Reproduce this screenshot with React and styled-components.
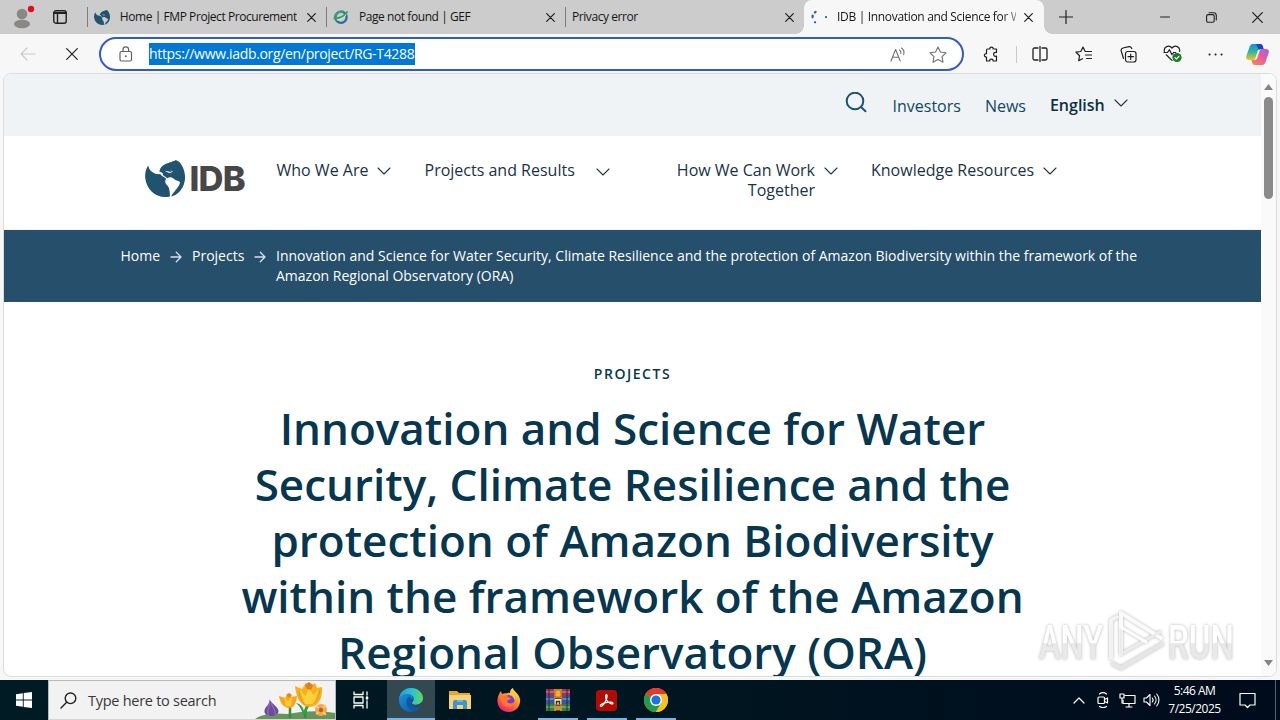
import React from 'react';
import styled, { createGlobalStyle } from 'styled-components';

const Global = createGlobalStyle`
  * { box-sizing: border-box; }
  html, body { margin: 0; padding: 0; overflow: hidden; }
  body { font-family: "Open Sans", "Noto Sans", sans-serif; }
  svg { display: block; flex: none; }
`;

const Desktop = styled.div`
  width: 1280px;
  height: 720px;
  display: flex;
  flex-direction: column;
  overflow: hidden;
  background: #f7f7f7;
`;

/* Browser chrome */
const TabStrip = styled.div`
  height: 34px;
  flex: none;
  display: flex;
  align-items: center;
  background: #cccccc;
`;
const StripButton = styled.div`
  width: ${(p) => p.$w}px;
  height: 34px;
  flex: none;
  display: flex;
  align-items: center;
  justify-content: center;
`;
const Tab = styled.div`
  position: relative;
  width: ${(p) => p.$w || 239}px;
  height: 34px;
  flex: none;
  display: flex;
  align-items: center;
  padding: 0 ${(p) => (p.$active ? 11 : 10)}px 0 7px;
  gap: ${(p) => p.$gap ?? 10}px;
  ${(p) =>
    p.$active
      ? `
    background: #f7f7f7;
    border-radius: 8px 8px 0 0;
    &::before, &::after { content: ""; position: absolute; bottom: 0; width: 8px; height: 8px; }
    &::before { left: -8px; background: radial-gradient(circle at 0 0, #ccc 7.5px, #f7f7f7 8px); }
    &::after { right: -8px; background: radial-gradient(circle at 100% 0, #ccc 7.5px, #f7f7f7 8px); }
  `
      : `&::before { content: ""; width: 1px; height: 20px; background: #7d7d7d; margin-left: -7px; margin-right: -4px; }`}
`;
const TabTitle = styled.span`
  flex: 1;
  min-width: 0;
  overflow: hidden;
  white-space: nowrap;
  font-size: 12px;
  line-height: 18px;
  letter-spacing: ${(p) => p.$ls || 0}px;
  color: #161616;
  ${(p) => p.$fade && 'mask-image: linear-gradient(90deg, #000 165px, transparent 192px);'}
`;
const Spacer = styled.div`
  flex: 1;
`;
const Toolbar = styled.div`
  height: 39px;
  flex: none;
  display: flex;
  align-items: center;
  padding-top: 1px;
  background: #f7f7f7;
`;
const AddressBar = styled.div`
  width: 865px;
  height: 34px;
  margin-left: 11px;
  flex: none;
  display: flex;
  align-items: center;
  border: 2px solid #315cc4;
  border-radius: 17px;
  background: #fff;
  padding: 0 15px 0 18px;
`;
const Url = styled.span`
  height: 22px;
  margin-left: 16px;
  width: 266px;
  line-height: 21px;
  font-size: 14px;
  letter-spacing: ${(p) => p.$ls}px;
  white-space: nowrap;
  background: #0078d7;
  color: #fff;
`;
const ToolDivider = styled.div`
  width: 1px;
  height: 17px;
  background: #c9c9c9;
`;

/* Web page */
const PageFrame = styled.div`
  position: relative;
  height: 604px;
  flex: none;
  margin: 0 3px;
  border: 1px solid #dcdcdc;
  border-radius: 8px;
  display: flex;
  overflow: hidden;
  background: #fff;
`;
const Page = styled.div`
  width: 1257px;
  flex: none;
  height: 602px;
  overflow: hidden;
  color: #173347;
`;
const UtilityBar = styled.div`
  height: 62px;
  display: flex;
  padding-left: 841px;
  background: #eff3f6;
  color: #0f4663;
`;
const UtilityLink = styled.span`
  margin: ${(p) => p.$top || 20}px 0 0 24px;
  font-size: 16px;
  line-height: 24px;
  font-weight: ${(p) => (p.$strong ? 600 : 400)};
  color: ${(p) => (p.$strong ? '#0c2f42' : 'inherit')};
  white-space: nowrap;
`;
const SearchToggle = styled.div`
  width: 23.5px;
  padding-top: 18px;
`;
const Header = styled.div`
  height: 94px;
  display: flex;
  padding: 24px 0 0 141px;
  border-bottom: 1px solid #f2f4f6;
`;
const Logo = styled.div`
  width: 131.5px;
  display: flex;
  align-items: flex-start;
`;
const LogoText = styled.span`
  font: 800 34.5px/37px Inter, sans-serif;
  letter-spacing: -0.8px;
  color: #474747;
  margin-left: 4.5px;
`;
const NavItem = styled.div`
  display: flex;
  align-items: flex-start;
  width: ${(p) => p.$w}px;
  font-size: 16px;
  line-height: 20px;
  white-space: nowrap;
`;
const NavLabel = styled.span`
  width: ${(p) => p.$w}px;
  text-align: ${(p) => p.$align || 'left'};
`;
const Gap = styled.div`
  width: ${(p) => p.$w}px;
  padding-top: ${(p) => p.$top || 0}px;
  display: flex;
  justify-content: flex-end;
`;
const Breadcrumbs = styled.div`
  height: 72px;
  display: flex;
  padding: 16px 0 0 116.5px;
  background: #254f6b;
  color: #fff;
  font-size: 14px;
  line-height: 20px;
  font-weight: 500;
`;
const Crumb = styled.div`
  width: ${(p) => p.$w}px;
  white-space: nowrap;
`;
const CrumbArrow = styled.div`
  width: 32px;
  padding: 5px 0 0 10px;
`;
const Hero = styled.main`
  padding-top: 62px;
  text-align: center;
  color: #06374f;
`;
const Eyebrow = styled.div`
  font-size: 14px;
  line-height: 20px;
  font-weight: 600;
  letter-spacing: 1.55px;
`;
const Title = styled.h1`
  margin: 16px 0 0;
  font-size: 44px;
  line-height: 56px;
  font-weight: 600;
  white-space: nowrap;
`;
const Scrollbar = styled.div`
  width: 15px;
  height: 602px;
  display: flex;
  flex-direction: column;
  align-items: center;
  background: #fafafa;
  padding: 10px 0;
`;
const Thumb = styled.div`
  width: 9px;
  height: 102px;
  margin-top: 7px;
  border-radius: 5px;
  background: #8b8b8b;
`;
const Watermark = styled.div`
  position: absolute;
  left: 1029px;
  top: 532px;
`;

/* Taskbar */
const Taskbar = styled.div`
  height: 40px;
  margin-top: auto;
  flex: none;
  display: flex;
  background: linear-gradient(90deg, #001b24, #001520 55%, #000b1c);
`;
const Start = styled.div`
  width: 48px;
  display: flex;
  align-items: center;
  justify-content: center;
`;
const Search = styled.div`
  width: 288px;
  flex: none;
  display: flex;
  align-items: center;
  padding-left: 11px;
  background: #f2f2f2;
  border: 1px solid #b8b8b8;
  border-bottom-color: #d5d5d5;
  color: #383838;
  font-size: 14.5px;
`;
const SearchText = styled.span`
  width: 172px;
  margin-left: 11px;
  letter-spacing: ${(p) => p.$ls}px;
  white-space: nowrap;
`;
const TaskButton = styled.div`
  width: ${(p) => p.$w || 49}px;
  display: flex;
  align-items: center;
  justify-content: center;
  position: relative;
  background: ${(p) => (p.$active ? '#34484f' : 'transparent')};
  &::after {
    content: "";
    display: ${(p) => (p.$open ? 'block' : 'none')};
    position: absolute;
    bottom: 0;
    height: 2px;
    width: ${(p) => (p.$active ? 48 : 40)}px;
    background: #76b5e8;
  }
`;
const TrayIcon = styled.div`
  width: 24px;
  display: flex;
  align-items: center;
  justify-content: center;
`;
const Clock = styled.div`
  width: 63px;
  padding-top: 2px;
  text-align: center;
  color: #fff;
  font-size: 12px;
  line-height: 18px;
  letter-spacing: ${(p) => p.$ls}px;
  white-space: nowrap;
`;
const ShowDesktop = styled.div`
  width: 5px;
  border-left: 1px solid #55616b;
`;

const Line = ({ w, h, d, sw = 1.2, c = '#202020', vb, children }) => (
  <svg width={w} height={h} viewBox={vb || `0 0 ${w} ${h}`} fill="none" stroke={c} strokeWidth={sw} strokeLinecap="round" strokeLinejoin="round">
    {d && <path d={d} />}
    {children}
  </svg>
);
const CloseX = ({ s = 9 }) => <Line w={s} h={s} d={`M.7.7 ${s - 0.7} ${s - 0.7}M${s - 0.7}.7.7 ${s - 0.7}`} sw={1.2} c="#1c1c1c" />;
const Chevron = () => <Line w={14} h={8} d="M1 1 7 7 13 1" sw={1.1} c="#253746" />;
const Arrow = () => <Line w={12} h={12} d="M1 6H11M6.3 1.2 11 6 6.3 10.8" sw={1.3} c="#d7e2e9" />;

const Globe = ({ w, h }) => (
  <svg width={w} height={h} viewBox="0 0 40 37" fill="#20536f">
    <path d="M3.200 5.500C.8 9-.3 13.500.3 18.500 1.500 29 10 37 20 37c2 0 3.500-.2 4.800-.6.3-3-.1-6-1-8.600-1-2.500-3.600-3.600-3.600-6 0-1.500.8-2.300.7-3.400-1.500-1.300-4.500-2-5.600-4.400-4 .8-10.800-1.500-12.100-8.500Z" />
    <path d="M14.300 11.500c1-2 .6-3.500 3.500-5.800C21.500 2.800 27.500 2 31 0c2 1.700 3 .8 4.500 3.500C39 8 41 15 39.600 21.500 38 29.500 32.500 35 26.300 36.600c.5-2.600 3-4.500 5-7.300 1.800-2.500 3.600-4.600 3.700-7.300-2-1.800-4.600-1.300-6.600-3.500-2-1.500-4.300-1.500-6-.3-1.500-1.200-3.500-1.800-4.700-3.700 1-1.500-1.200-2-3.400-3Z" />
    <path d="m19.500 10.800 4.500.6 3.500 1.800-4-.4ZM25 10.500l3 .8-1 .6Z" fill="#fff" />
  </svg>
);

const Avatar = () => (
  <svg width="28" height="28" viewBox="0 0 28 28">
    <circle cx="14" cy="11" r="5.300" fill="#8b8783" />
    <ellipse cx="14" cy="21" rx="8" ry="4.200" fill="#8b8783" />
    <circle cx="23" cy="6" r="3.200" fill="#df0c24" />
  </svg>
);
const Gef = () => (
  <svg width="16" height="16" viewBox="0 0 16 16" fill="none">
    <circle cx="8" cy="8.300" r="5.600" stroke="#2f68a8" strokeWidth="2.300" />
    <path d="M2.400 7.500C3 4 6.500 2 10.500 2.600" stroke="#3f9f86" strokeWidth="2.200" />
    <path d="M.5 9C6 9.800 11 7.500 14.500 2.500" stroke="#38a657" strokeWidth="2" />
    <path d="M3.600 11c4 0 7.500-1.800 9.600-5.400" stroke="#d6e6e6" strokeWidth="1" />
  </svg>
);
const Spinner = () => (
  <svg width="18" height="16" viewBox="0 0 18 16" fill="none" stroke="#1f62a5" strokeWidth="2.200" strokeLinecap="round">
    <path d="M4.600 2.800 3.900 3.500M1.600 6.700v1.600M4 13.200l.1.1M15 8v.1" />
  </svg>
);
const Heart = () => (
  <svg width="19" height="18" viewBox="0 0 19 18" fill="none" stroke="#202020" strokeWidth="1.200" strokeLinejoin="round" strokeLinecap="round">
    <path d="M1.300 6.500C.5 2 5.800-.8 9 3c3.200-3.800 8.500-1 7.600 3.400M3.200 9.800 9 15.400M1 7.500h3.600L6.500 4.700 9 9.700l1.600-2.200h2.200" />
    <circle cx="14" cy="12.500" r="4.600" fill="#138022" stroke="none" />
    <path d="m12 12.600 1.400 1.400 2.600-2.700" stroke="#fff" />
  </svg>
);
const Copilot = () => (
  <svg width="23" height="21" viewBox="0 0 23 21">
    <defs>
      <linearGradient id="cpA" x1="0" y1="0" x2="0" y2="1"><stop offset="0" stopColor="#1591dc" /><stop offset=".5" stopColor="#31b994" /><stop offset="1" stopColor="#f2c32b" /></linearGradient>
      <linearGradient id="cpB" x1="1" y1="0" x2="0" y2="1"><stop offset="0" stopColor="#a35df0" /><stop offset=".5" stopColor="#ee5b94" /><stop offset="1" stopColor="#fb8d45" /></linearGradient>
    </defs>
    <path d="M7 0h7c2 0 2.500 1 3 3l.6 2h-3c-2 0-2.600 1-3 2.500L9.400 14c-.5 1.500-1 2-3 2H3c-2.500 0-3.500-1.500-2.600-4.200L3.500 3C4.200 1 5 0 7 0Z" fill="url(#cpA)" />
    <path d="M16 21H9c-2 0-2.500-1-3-3l-.6-2h3c2 0 2.600-1 3-2.500L13.600 7c.5-1.500 1-2 3-2H20c2.500 0 3.500 1.500 2.600 4.200L19.500 18c-.7 2-1.500 3-3.500 3Z" fill="url(#cpB)" />
    <path d="M10 0h4c2 0 2.500 1 3 3l.6 2h-3L13 6Z" fill="#1745c6" />
  </svg>
);

const Flowers = () => (
  <svg width="80" height="38" viewBox="0 0 80 38">
    <path d="M0 38c9-6 20-6 32-5 16-3 31-4 48-1v6Z" fill="#64955a" />
    <path d="M35 37V25M50 37c0-7 1-11 4-16" stroke="#3f8a36" strokeWidth="2.500" fill="none" />
    <path d="M48 33c-2-5-3-8-7-11 5 1 7 4 8 8 1-5 5-7 10-9-5 4-8 7-7 12Z" fill="#30a043" />
    <path d="M14.500 18c1 4 9 8 9 12 0 6-13 7-14 1-1-5 6-7 5-13Z" fill="#6d4b9c" />
    <path d="M14.500 20c0 7-3 10-1 15M16 22c3 7 5 8 4 12" stroke="#9a78bd" fill="none" />
    <path d="M24 15l6 2 3-4 4 3 5-1c-1 8-3 12-8 12s-9-5-10-12Z" fill="#f8a51c" />
    <path d="m29 16 4 4 4-5-1 10h-5Z" fill="#ffc936" />
    <path d="m31 14 3-2 3 2-3 3Z" fill="#e9841d" />
    <path d="M40 5l7 3 4-6 5 3 4-3 2 5 5-1c1 11-4 20-12 20-9 0-14-9-15-21Z" fill="#f9b01c" />
    <path d="m44 8 7 7 3-9 4 8 6-6-5 15h-9Z" fill="#ffd23c" />
    <path d="m50 4 4-3 4 3-2 5-4-1Z" fill="#e57d20" />
    <path d="M44 9c0 6 2 11 6 15M65 9c-1 6-3 11-7 14" stroke="#e89517" strokeWidth="1" fill="none" />
    <circle cx="66" cy="29" r="6" fill="#f5a84b" />
    <circle cx="66" cy="29" r="2.200" fill="#b96223" />
    <path d="m61 25 3 2m7-3-3 3m3 7-3-3m-7 2 3-2" stroke="#ffd07c" strokeWidth="1.500" />
  </svg>
);
const EdgeIcon = () => (
  <svg width="26" height="26" viewBox="0 0 26 26">
    <defs>
      <linearGradient id="edA" x1="0" y1=".4" x2="1" y2=".4"><stop offset="0" stopColor="#239ee0" /><stop offset=".55" stopColor="#2bc3d1" /><stop offset="1" stopColor="#62d957" /></linearGradient>
      <linearGradient id="edB" x1="0" y1="0" x2="1" y2="1"><stop offset="0" stopColor="#1b9de2" /><stop offset="1" stopColor="#0d4a9f" /></linearGradient>
    </defs>
    <circle cx="13" cy="13" r="12" fill="url(#edB)" />
    <path d="M1 12C2 5 7 1 13 1c7 0 12 5 12 10 0 4-3 7-7 7-3 0-4-1-4-2s2-2 2-4c0-3-3-5-7-5-4 0-7 2-8 5Z" fill="url(#edA)" />
    <path d="M9.500 11C6 17 11 24 18 23.800c2-.6 4-2 5.300-4.300-3 1.500-8 1-10-1.500-1.500-2-1-5 0-6-1-2-3-2-3.800-1Z" fill="#0c59a4" />
    <path d="M15.500 13c-1 1-2 2-1.500 3.200 1 2 5 2 7.500.6 1.500-.8 2.500-2 3-3.200 .3 1.500 .9 4-.4 6.600-3 .8-8.800.3-10.800-2.200-1.300-1.800-1-4 .2-6Z" fill="#34484f" />
  </svg>
);
const Folder = () => (
  <svg width="22" height="20" viewBox="0 0 22 20">
    <path d="M0 1h8l2 2h11v16H0Z" fill="#e8a92b" />
    <path d="M0 5h22v14H0Z" fill="#f8d275" />
    <path d="M4 19v-7c0-1 1-2 2-2h10c1 0 2 1 2 2v7h-4v-4H8v4Z" fill="#3c95d2" />
    <path d="M8 10h6v2H8Z" fill="#69b8e9" />
  </svg>
);
const Firefox = () => (
  <svg width="24" height="24" viewBox="0 0 24 24">
    <defs>
      <linearGradient id="ffA" x1=".8" y1="0" x2=".2" y2="1"><stop offset="0" stopColor="#fff04a" /><stop offset=".4" stopColor="#ff9a24" /><stop offset=".75" stopColor="#ff4553" /><stop offset="1" stopColor="#df1785" /></linearGradient>
    </defs>
    <path d="M4 3c0 1 .4 2 1.200 3C7 5 8 5 9.500 5.400 11 4 13 5 13 5c0-2 .5-4 3-5 0 3 6 5 7 11 1 7-4 13-11 13S0 19 .5 12C.7 8 2 6 4 3Z" fill="url(#ffA)" />
    <circle cx="12" cy="12.500" r="5.500" fill="#743bd5" />
    <path d="M4 9c3-2 6-2 7 0l3 1c-1 2-3 2-4 3 1 3 5 3 7 1 0 3-3 5-6 5-5 0-8-5-7-10Z" fill="#ff762e" />
    <path d="M12 7c3 0 5 2 5.300 5C19 9 17 6 14 4Z" fill="#ffcb35" />
  </svg>
);
const WinRar = () => (
  <svg width="24" height="22" viewBox="0 0 24 22">
    <path d="M0 0h24v7H0Z" fill="#a33156" /><path d="M0 7h24v8H0Z" fill="#3857a5" /><path d="M0 15h24v7H0Z" fill="#2f843d" />
    <path d="M0 3h24M0 10h24M0 18h24" stroke="#e2e0e8" strokeWidth="1" opacity=".6" />
    <path d="M3 0v22M21 0v22" stroke="#1c2835" strokeWidth="1.500" opacity=".65" />
    <path d="M8 0h8v22H8Z" fill="#d98b1d" /><path d="M10 11h4v11h-4Z" fill="#744719" />
    <path d="M9 3c0-3 6-3 6 0v5H9Z" fill="#f0ae35" stroke="#a35b14" strokeWidth=".8" />
    <path d="M10 18h4M10 20h4" stroke="#ffdc76" />
    <rect x="8" y="9.500" width="8" height="6.500" rx="1" fill="#f7edce" stroke="#6c4b24" />
    <path d="M10.500 15.500v-3h3v3" fill="none" stroke="#333" strokeWidth="1.500" />
  </svg>
);
const Acrobat = () => (
  <svg width="21" height="21" viewBox="0 0 21 21">
    <rect width="21" height="21" rx="3.500" fill="#b30b00" />
    <path d="M4.600 16.200c-1-.8 1-2.600 5-3.500 3.500-.8 7.300-1 7.300.5 0 1.600-3.500.1-5.600-2.100C9.500 9.200 9 5 10.200 4.700c1.400-.2.900 3.700-.8 6.900-1.600 3-3.900 5.400-4.800 4.600Z" fill="none" stroke="#fff" strokeWidth="1.300" />
  </svg>
);
const Chrome = () => (
  <svg width="24" height="24" viewBox="0 0 24 24">
    <circle cx="12" cy="12" r="12" fill="#fbc116" />
    <path d="M12 12 1.600 6A12 12 0 0 1 22.400 6Z" fill="#e33b2e" />
    <path d="M1.600 6A12 12 0 0 0 12 24l5.200-9L12 12Z" fill="#249b4a" />
    <path d="M22.400 6A12 12 0 0 1 12 24l5.200-9L12 6Z" fill="#fbc116" />
    <circle cx="12" cy="12" r="6" fill="#fff" /><circle cx="12" cy="12" r="4.600" fill="#1b73e8" />
  </svg>
);

const WatermarkArt = styled.svg`
  filter: drop-shadow(0 0 1.5px rgba(0, 0, 0, 0.3));
`;
const AnyRun = () => (
  <WatermarkArt width="210" height="70" viewBox="0 0 210 70">
    <defs>
      <linearGradient id="wm" x1="0" y1="0" x2="0" y2="1"><stop offset=".5" stopColor="#fff" /><stop offset=".52" stopColor="#e9e9e9" /></linearGradient>
    </defs>
    <g fontFamily="Roboto, sans-serif" fontSize="49" fontWeight="500" fill="url(#wm)">
      <text x="6" y="53" textLength="64" lengthAdjust="spacingAndGlyphs">ANY</text>
      <text x="135" y="53" textLength="66" lengthAdjust="spacingAndGlyphs">RUN</text>
    </g>
    <g fill="none" strokeLinejoin="round" strokeLinecap="round" strokeWidth="4">
      <path d="M78 52V14l6-3" stroke="#f3f3f3" />
      <path d="M88 48V7l40 25" stroke="#fafafa" />
      <path d="M88 21V48l39-22" stroke="#ececec" strokeWidth="3" />
      <path d="M88 21 113 36" stroke="#fff" strokeWidth="3" />
      <path d="M80 58l8 4 41-24" stroke="#e6e6e6" />
    </g>
  </WatermarkArt>
);

export default function App() {
  return (
    <>
      <Global />
      <Desktop>
        <TabStrip>
          <StripButton $w={44}><Avatar /></StripButton>
          <StripButton $w={32}>
            <Line w={14} h={14} sw={1.4}><rect x=".8" y=".8" width="12.400" height="12.400" rx="2" /><path d="M1 3h12" strokeWidth="2" /><path d="M4.500 4v9" /></Line>
          </StripButton>
          <Gap $w={11} />
          <Tab $gap={9.9}><Globe w={16} h={15} /><TabTitle $ls={-0.43}>Home | FMP Project Procurement</TabTitle><CloseX /></Tab>
          <Tab><Gef /><TabTitle $ls={-0.43}>Page not found | GEF</TabTitle><CloseX /></Tab>
          <Tab><TabTitle $ls={-0.43}>Privacy error</TabTitle><CloseX /></Tab>
          <Tab $w={240} $gap={8} $active><Spinner /><TabTitle $ls={-0.32} $fade>IDB | Innovation and Science for Water</TabTitle><CloseX /></Tab>
          <StripButton $w={43}><Line w={14} h={14} d="M7 .5V13.500M.5 7H13.500" /></StripButton>
          <Spacer />
          <StripButton $w={46}><Line w={10} h={2} d="M.5 1H9.500" sw={1} /></StripButton>
          <StripButton $w={46}><Line w={11} h={11} sw={1.100}><rect x=".6" y="2.600" width="7.600" height="7.600" rx="1.500" /><path d="M3 .7h4.500c1.800 0 2.800 1 2.800 2.800V8" /></Line></StripButton>
          <StripButton $w={46}><CloseX s={11} /></StripButton>
        </TabStrip>

        <Toolbar>
          <StripButton $w={56}><Line w={16} h={14} d="M15 7H1M7 1 1 7l6 6" c="#c9c9c9" /></StripButton>
          <StripButton $w={32}><Line w={12} h={12} d="M.7.7 11.300 11.300M11.300.7.7 11.300" /></StripButton>
          <AddressBar>
            <Line w={14} h={16} c="#606060"><rect x="1" y="5.500" width="11.500" height="9.500" rx="1.500" /><path d="M4 5.500V3.600a2.800 2.800 0 0 1 5.600 0v1.900" /><circle cx="6.800" cy="10.200" r=".4" /></Line>
            <Url $ls={-0.33}>https://www.iadb.org/en/project/RG-T4288</Url>
            <Spacer />
            <Line w={16} h={15} d="M1 14 5.600 2.500 10.300 14M2.600 10.200h6M9.500 3c1.400.9 1.700 2.200 1.300 3.600M11.500 1c2.300 1.600 2.900 4 2.200 6.600" c="#707070" sw={1.1} />
            <Gap $w={23} />
            <Line w={18} h={17} d="M9 1 11.400 6 17 6.800 13 10.700 14 16.200 9 13.500 4 16.200 5 10.700 1 6.800 6.600 6Z" c="#707070" sw={1.1} />
          </AddressBar>
          <StripButton $w={52}><Line w={16} h={17} vb="-1.500 0 16 17" d="M4 3h2.400C5.800.4 10.200.4 9.600 3H13v3.500H12.500C9.300 5.600 9.300 11 12.500 10.200H13V15H9.600c.4-2.600-3.800-2.600-3.400 0H3v-4C.2 11.300.2 7.400 3 7.600V4C3 3.400 3.400 3 4 3Z" /></StripButton>
          <ToolDivider />
          <StripButton $w={45}><Line w={16} h={16} sw={1.300} d="M6 2H2.500C1.500 2 1 2.600 1 3.500v9c0 1 .5 1.500 1.500 1.500H6M10 2h3.500c1 0 1.500.6 1.500 1.500v9c0 1-.5 1.500-1.500 1.500H10M8 .5v15" /></StripButton>
          <StripButton $w={44}><Line w={18} h={16} d="M10 5.200 8 1 5.800 5.500 1 6.200l3.600 3.500-.9 5 3.800-2M10.500 5.500h6M10.500 9h6M11.500 12.500h5" /></StripButton>
          <StripButton $w={44}><Line w={17} h={17}><rect x="5.500" y="5.500" width="10.500" height="10.500" rx="2.200" /><path d="M3.500 12.500 1.200 5C.8 3.400 1.600 2.500 3 2l6-1.300c1.400-.3 2.400.5 2.800 2M10.700 8v5.500M8 10.700h5.500" /></Line></StripButton>
          <StripButton $w={45}><Heart /></StripButton>
          <StripButton $w={41}><Line w={15} h={3} d="M1.500 1.500h.1M7.500 1.500h.1M13.500 1.500h.1" sw={2} /></StripButton>
          <StripButton $w={43}><Copilot /></StripButton>
        </Toolbar>

        <PageFrame>
          <Page>
            <UtilityBar>
              <SearchToggle><Line w={22} h={22} c="#1a5472" sw={2}><circle cx="10" cy="9" r="8.300" /><path d="m16 15 4.500 4.300" /></Line></SearchToggle>
              <UtilityLink>Investors</UtilityLink>
              <UtilityLink>News</UtilityLink>
              <UtilityLink $strong $top={19}>English</UtilityLink>
              <Gap $w={23.5} $top={25}><Chevron /></Gap>
            </UtilityBar>
            <Header>
              <Logo><Globe w={40} h={37} /><LogoText>IDB</LogoText></Logo>
              <NavItem $w={148}><NavLabel $w={92}>Who We Are</NavLabel><Gap $w={22} $top={7}><Chevron /></Gap></NavItem>
              <NavItem $w={251.5}><NavLabel $w={151}>Projects and Results</NavLabel><Gap $w={34} $top={8}><Chevron /></Gap></NavItem>
              <NavItem $w={195}><NavLabel $w={139} $align="right">How We Can Work<br />Together</NavLabel><Gap $w={23} $top={7}><Chevron /></Gap></NavItem>
              <NavItem $w={190}><NavLabel $w={163}>Knowledge Resources</NavLabel><Gap $w={22.5} $top={7}><Chevron /></Gap></NavItem>
            </Header>
            <Breadcrumbs>
              <Crumb $w={39.5}>Home</Crumb><CrumbArrow><Arrow /></CrumbArrow>
              <Crumb $w={52}>Projects</Crumb><CrumbArrow><Arrow /></CrumbArrow>
              <Crumb $w={870}>Innovation and Science for Water Security, Climate Resilience and the protection of Amazon Biodiversity within the framework of the<br />Amazon Regional Observatory (ORA)</Crumb>
            </Breadcrumbs>
            <Hero>
              <Eyebrow>PROJECTS</Eyebrow>
              <Title>Innovation and Science for Water<br />Security, Climate Resilience and the<br />protection of Amazon Biodiversity<br />within the framework of the Amazon<br />Regional Observatory (ORA)</Title>
            </Hero>
          </Page>
          <Scrollbar>
            <svg width="9" height="6"><path d="M0 6 4.500 0 9 6Z" fill="#858585" /></svg>
            <Thumb />
            <Spacer />
            <svg width="9" height="6"><path d="M0 0h9L4.500 6Z" fill="#858585" /></svg>
          </Scrollbar>
          <Watermark><AnyRun /></Watermark>
        </PageFrame>

        <Taskbar>
          <Start><svg width="16" height="16" viewBox="0 0 16 16" fill="#fff"><path d="M0 2.200 6.800 1.300V7.500H0ZM7.700 1.100 16 0v7.500H7.700ZM0 8.400h6.800v6.300L0 13.800ZM7.700 8.400H16V16l-8.300-1.100Z" /></svg></Start>
          <Search>
            <Line w={17} h={17} c="#222" sw={1.400}><circle cx="10.500" cy="6.300" r="5.300" /><path d="M6.700 10.200 1 16" /></Line>
            <SearchText $ls={-0.27}>Type here to search</SearchText>
            <Flowers />
          </Search>
          <TaskButton>
            <Line w={18} h={18} c="#fff" sw={1.300}><path d="M2 1v2.500h9V1M2 17v-2.500h9V17M2 6h9v6H2ZM15 1v3M15 10v7" /><path d="M15 6.500v1" strokeWidth="2.500" /></Line>
          </TaskButton>
          <Gap $w={2} />
          <TaskButton $w={48} $active $open><EdgeIcon /></TaskButton>
          <TaskButton><Folder /></TaskButton>
          <TaskButton><Firefox /></TaskButton>
          <TaskButton $open><WinRar /></TaskButton>
          <TaskButton $open><Acrobat /></TaskButton>
          <TaskButton $open><Chrome /></TaskButton>
          <Spacer />
          <TrayIcon><Line w={12} h={7} c="#fff" d="M1 6 6 1 11 6" /></TrayIcon>
          <TrayIcon><Line w={12} h={16} c="#fff"><rect x="1" y="5" width="6.500" height="6.500" rx="1" /><path d="M7.500 7.500 10.500 6v5L7.500 9.500M2.500 2C4.500.5 7.500.5 9.500 2M2.500 14.500c2 1.400 5 1.400 7 0" /></Line></TrayIcon>
          <TrayIcon><Line w={17} h={15} c="#fff"><path d="M6 2.500h10v8H4V7M10 10.500V14M7 14h6" /><path d="M1 1h4v4H1ZM3 5v5" /></Line></TrayIcon>
          <TrayIcon><Line w={17} h={14} c="#fff" sw={1.100}><path d="M1 5h2.500L7 1.500v11L3.500 9H1ZM9.300 5c1 1.200 1 2.800 0 4M11.500 3c2 2.300 2 5.700 0 8M13.700 1c3 3.500 3 8.500 0 12" /></Line></TrayIcon>
          <Clock $ls={-0.5}>5:46 AM<br />7/25/2025</Clock>
          <Gap $w={9} />
          <TrayIcon><Line w={17} h={17} c="#fff"><path d="M1 1.500h15v11.500h-5L8.500 15.500 6 13H1Z" /></Line></TrayIcon>
          <Gap $w={16} />
          <ShowDesktop />
        </Taskbar>
      </Desktop>
    </>
  );
}
